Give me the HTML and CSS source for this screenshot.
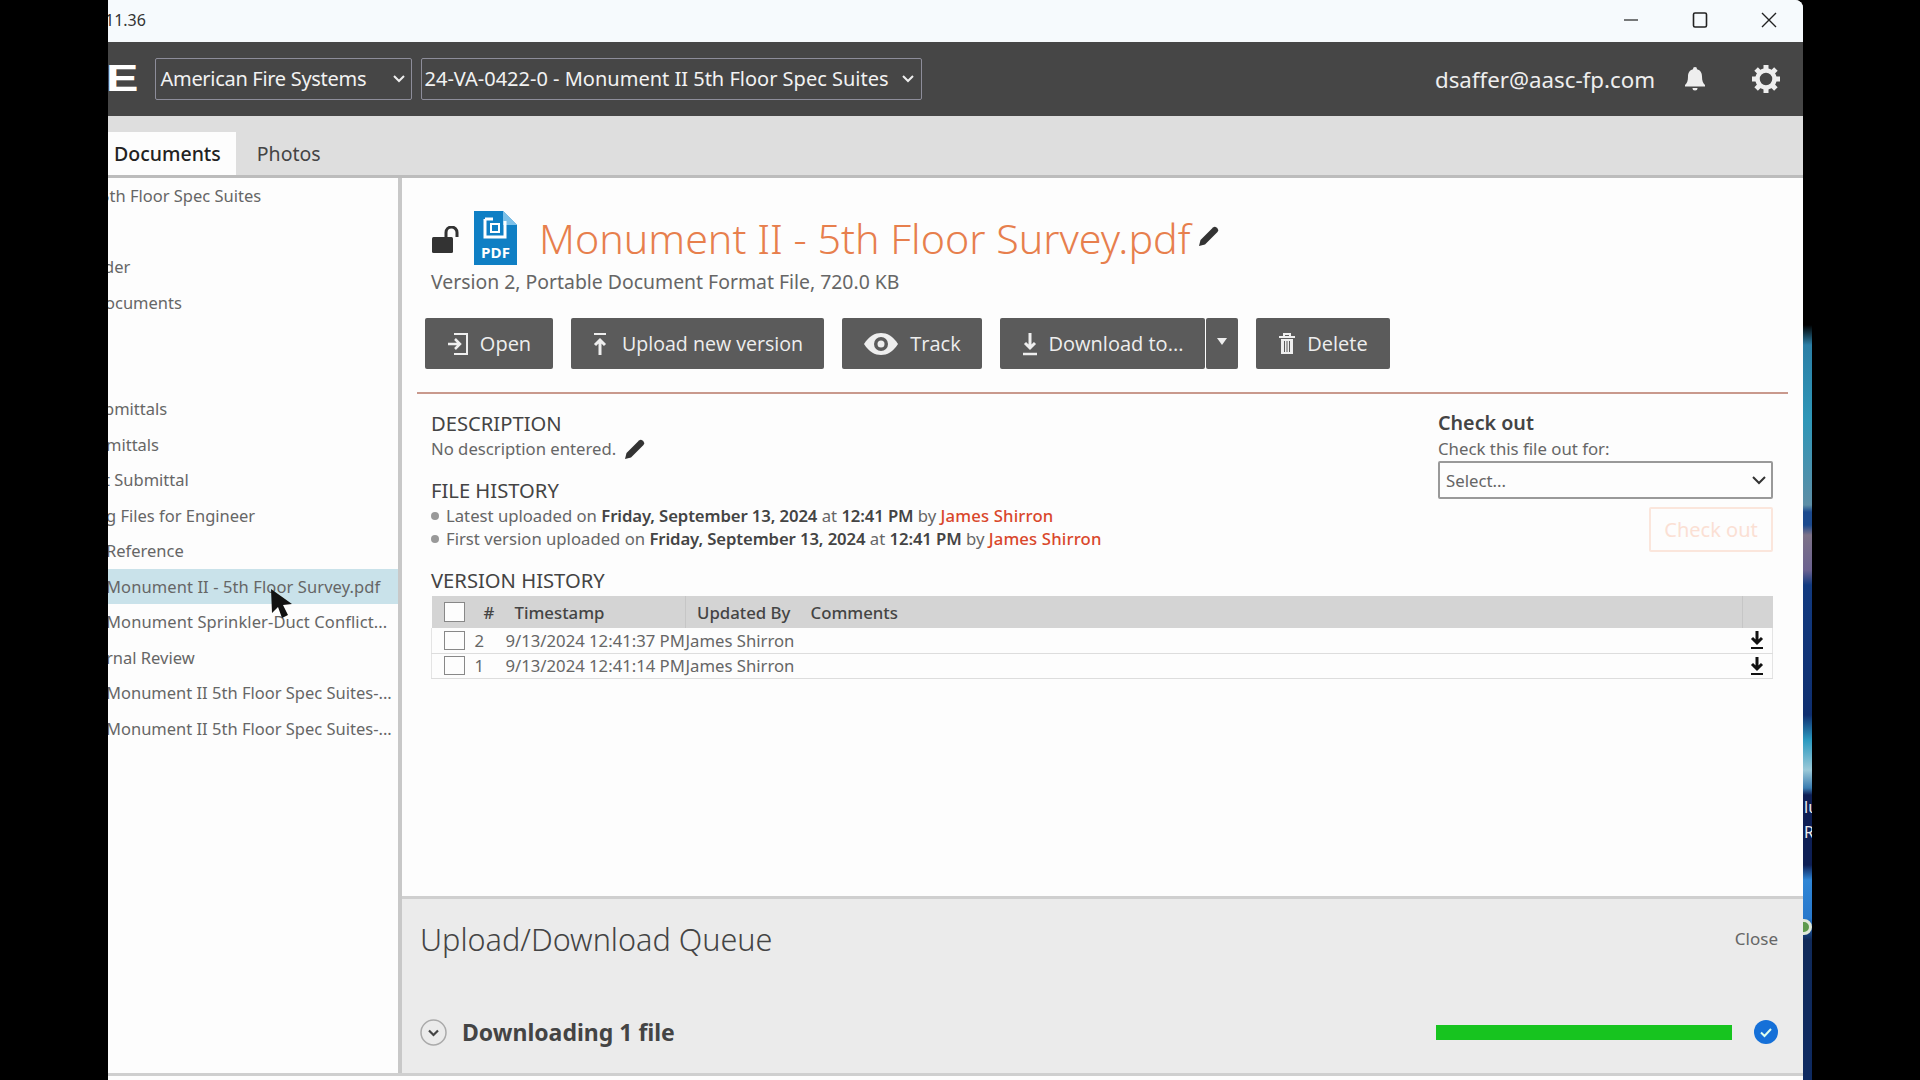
FILE: index.html
```html
<!DOCTYPE html>
<html lang="en">
<head>
  <meta charset="UTF-8" />
  <title>Monument II - 5th Floor Survey.pdf</title>
  <link rel="stylesheet" href="styles.css">
</head>
<body>
  <div class="window">
    <div class="titlebar">
      <span class="version">11.36</span>
      <div class="win-controls">
        <svg width="16" height="16" viewBox="0 0 16 16"><path d="M1 8h14" stroke="#222" stroke-width="1.2"/></svg>
        <svg width="16" height="16" viewBox="0 0 16 16"><rect x="1.5" y="1" width="13" height="14" rx="1.5" fill="none" stroke="#222" stroke-width="1.6"/></svg>
        <svg width="16" height="16" viewBox="0 0 16 16"><path d="M1 1l14 14M15 1L1 15" stroke="#222" stroke-width="1.4"/></svg>
      </div>
    </div>

    <header class="topbar">
      <span class="logo">E</span>
      <div class="picker picker-company">American Fire Systems
        <svg class="caret" width="12" height="8" viewBox="0 0 12 8"><path d="M1 1l5 5 5-5" fill="none" stroke="#eee" stroke-width="2"/></svg>
      </div>
      <div class="picker picker-project">24-VA-0422-0 - Monument II 5th Floor Spec Suites
        <svg class="caret" width="12" height="8" viewBox="0 0 12 8"><path d="M1 1l5 5 5-5" fill="none" stroke="#eee" stroke-width="2"/></svg>
      </div>
      <div class="user">dsaffer@aasc-fp.com</div>
      <svg class="bell" width="22" height="26" viewBox="0 0 22 26"><path d="M11 1a2 2 0 0 1 2 2.2c3.6.9 5 3.8 5 7.3 0 4.500 1 6.500 3 8.500v1.500H1V19c2-2 3-4 3-8.500 0-3.500 1.400-6.400 5-7.300A2 2 0 0 1 11 1zM8.500 22h5a2.500 2.500 0 0 1-5 0z" fill="#eee"/></svg>
      <svg class="gear" width="30" height="30" viewBox="0 0 30 30"><circle cx="15" cy="15" r="8.500" fill="none" stroke="#eee" stroke-width="4.500"/><g stroke="#eee" stroke-width="5"><path d="M15 1v6M15 23v6M1 15h6M23 15h6M5.100 5.100l4.200 4.200M20.700 20.700l4.200 4.200M24.900 5.100l-4.200 4.200M9.300 20.700l-4.200 4.200"/></g></svg>
    </header>

    <div class="tabs">
      <div class="tab active">Documents</div>
      <div class="tab">Photos</div>
    </div>

    <div class="body">
      <aside class="tree">
        <div class="row clip-b">5th Floor Spec Suites</div>
        <div class="row"></div>
        <div class="row clip-c">der</div>
        <div class="row clip-a">ocuments</div>
        <div class="row"></div>
        <div class="row"></div>
        <div class="row clip-c">bmittals</div>
        <div class="row clip-m">mittals</div>
        <div class="row clip-c">t Submittal</div>
        <div class="row clip-m">g Files for Engineer</div>
        <div class="row clip-m">Reference</div>
        <div class="row selected wide">Monument II - 5th Floor Survey.pdf</div>
        <div class="row clip-m wide">Monument Sprinkler-Duct Conflict...</div>
        <div class="row clip-m">rnal Review</div>
        <div class="row clip-m">Monument II 5th Floor Spec Suites-...</div>
        <div class="row clip-m">Monument II 5th Floor Spec Suites-...</div>
      </aside>

      <main class="main">
        <section class="detail">
          <div class="file-title">
            <svg class="lock" width="30" height="28" viewBox="0 0 30 28"><rect x="1" y="11" width="21" height="16" rx="1.500" fill="#333"/><path d="M15 11V6.500a5.500 5.500 0 0 1 11 0V11" fill="none" stroke="#333" stroke-width="3"/></svg>
            <svg class="pdf" width="43" height="54" viewBox="0 0 43 54">
              <path d="M0 0h29l14 14v40H0z" fill="#0f7fc4"/>
              <path d="M29 0l14 14H29z" fill="#7cc0e8"/>
              <path d="M11 8v18h20V10" fill="none" stroke="#fff" stroke-width="3"/>
              <path d="M11 8h8" stroke="#fff" stroke-width="3"/>
              <rect x="17" y="13" width="8" height="8" fill="none" stroke="#fff" stroke-width="2"/>
              <text x="21.500" y="47" class="pdf-label">PDF</text>
            </svg>
            <h1>Monument II - 5th Floor Survey.pdf</h1>
            <svg class="pencil" width="22" height="22" viewBox="0 0 22 22"><path d="M1 21l1.500-6L15 2.500a2.500 2.500 0 0 1 3.500 0l1 1a2.500 2.500 0 0 1 0 3.500L7 19.500z" fill="#333"/></svg>
          </div>
          <div class="file-sub">Version 2, Portable Document Format File, 720.0 KB</div>

          <div class="actions">
            <button class="btn btn-open">
              <svg width="22" height="24" viewBox="0 0 22 24"><path d="M7 2h13v20H7" fill="none" stroke="#eee" stroke-width="2"/><path d="M1 12h11M8 7l5 5-5 5" fill="none" stroke="#eee" stroke-width="2.500"/></svg>
              Open</button>
            <button class="btn btn-upload">
              <svg width="16" height="24" viewBox="0 0 16 24"><path d="M2 2h12" stroke="#eee" stroke-width="2"/><path d="M8 23V8M3 13l5-5 5 5" fill="none" stroke="#eee" stroke-width="3"/></svg>
              Upload new version</button>
            <button class="btn btn-track">
              <svg width="36" height="24" viewBox="0 0 36 24"><path d="M1 12C6 4 12 1 18 1s12 3 17 11c-5 8-11 11-17 11S6 20 1 12z" fill="#eee"/><circle cx="18" cy="12" r="7" fill="#5b5b5b"/><circle cx="18" cy="12" r="3.500" fill="#eee"/></svg>
              Track</button>
            <div class="split">
              <button class="btn btn-download">
                <svg width="16" height="24" viewBox="0 0 16 24"><path d="M8 1v15M3 11l5 5 5-5" fill="none" stroke="#eee" stroke-width="3"/><path d="M1 22h14" stroke="#eee" stroke-width="2.500"/></svg>
                Download to...</button>
              <button class="btn btn-more"><span class="tri"></span></button>
            </div>
            <button class="btn btn-delete">
              <svg width="18" height="24" viewBox="0 0 18 24"><path d="M1 5h16M6 5V2h6v3" fill="none" stroke="#eee" stroke-width="2"/><path d="M3 7h12v15H3z" fill="#eee"/><path d="M6.500 9v11M9 9v11M11.500 9v11" stroke="#5b5b5b" stroke-width="1"/></svg>
              Delete</button>
          </div>
          <hr class="rule">

          <div class="info">
            <div class="info-left">
              <h2>DESCRIPTION</h2>
              <p class="no-desc">No description entered.
                <svg width="22" height="22" viewBox="0 0 22 22"><path d="M1 21l1.500-6L15 2.500a2.500 2.500 0 0 1 3.500 0l1 1a2.500 2.500 0 0 1 0 3.500L7 19.500z" fill="#333"/></svg>
              </p>
              <h2 class="file-history">FILE HISTORY</h2>
              <ul class="history">
                <li>Latest uploaded on <b>Friday, September 13, 2024</b> at <b>12:41 PM</b> by <a>James Shirron</a></li>
                <li>First version uploaded on <b>Friday, September 13, 2024</b> at <b>12:41 PM</b> by <a>James Shirron</a></li>
              </ul>
            </div>
            <div class="checkout">
              <h3>Check out</h3>
              <div class="checkout-label">Check this file out for:</div>
              <div class="select">Select...
                <svg width="14" height="9" viewBox="0 0 14 9"><path d="M1 1l6 6 6-6" fill="none" stroke="#333" stroke-width="2"/></svg>
              </div>
              <div class="checkout-btn">Check out</div>
            </div>
          </div>

          <h2 class="version-title">VERSION HISTORY</h2>
          <table class="versions">
            <thead>
              <tr>
                <th class="col-check"><span class="box box-head"></span></th>
                <th class="col-num">#</th>
                <th class="col-time">Timestamp</th>
                <th class="col-by">Updated By</th>
                <th class="col-comments">Comments</th>
                <th class="col-dl"></th>
              </tr>
            </thead>
            <tbody>
              <tr>
                <td><span class="box"></span></td>
                <td class="num">2</td>
                <td class="time">9/13/2024 12:41:37 PM</td>
                <td>James Shirron</td>
                <td></td>
                <td class="dl"><svg width="14" height="20" viewBox="0 0 14 20"><path d="M7 1v12M2 8l5 5 5-5" fill="none" stroke="#111" stroke-width="3"/><path d="M1 18h12" stroke="#111" stroke-width="2"/></svg></td>
              </tr>
              <tr>
                <td><span class="box"></span></td>
                <td class="num">1</td>
                <td class="time">9/13/2024 12:41:14 PM</td>
                <td>James Shirron</td>
                <td></td>
                <td class="dl"><svg width="14" height="20" viewBox="0 0 14 20"><path d="M7 1v12M2 8l5 5 5-5" fill="none" stroke="#111" stroke-width="3"/><path d="M1 18h12" stroke="#111" stroke-width="2"/></svg></td>
              </tr>
            </tbody>
          </table>
        </section>

        <section class="queue">
          <div class="queue-head">
            <h2>Upload/Download Queue</h2>
            <span class="queue-close">Close</span>
          </div>
          <div class="queue-row">
            <svg width="27" height="27" viewBox="0 0 27 27"><circle cx="13.500" cy="13.500" r="12.500" fill="none" stroke="#aaa" stroke-width="1.500"/><path d="M9 11.500l4.500 4.500 4.500-4.500" fill="none" stroke="#444" stroke-width="2.200"/></svg>
            <span class="queue-name">Downloading 1 file</span>
            <div class="bar"></div>
            <svg class="done" width="24" height="24" viewBox="0 0 24 24"><circle cx="12" cy="12" r="12" fill="#1570d8"/><path d="M7 12.500l3.500 3.500 6.500-7" fill="none" stroke="#dfe" stroke-width="2"/></svg>
          </div>
        </section>
      </main>
    </div>
    <div class="footer-strip"></div>

    <svg class="cursor" width="24" height="32" viewBox="0 0 24 32"><path d="M2 1l1 24 6-6 4 11 6-3-5-10 9-1z" fill="#111"/></svg>
  </div>

  <div class="wallpaper">
    <span class="wp-text wp-one">lu</span>
    <span class="wp-text wp-two">Ri</span>
    <span class="wp-badge"></span>
  </div>
</body>
</html>
```

FILE: styles.css
```css
* {
  margin: 0;
  padding: 0;
  box-sizing: border-box;
}

body {
  background: #000;
  height: 1080px;
  overflow: hidden;
  display: flex;
  padding-left: 108px;
  font-family: "Noto Sans", "Open Sans", sans-serif;
  color: #555;
}

.window {
  position: relative;
  width: 1695px;
  height: 1080px;
  display: flex;
  flex-direction: column;
  background: #fdfdfd;
  border-top-right-radius: 8px;
  overflow: hidden;
}

.wallpaper {
  position: relative;
  width: 9px;
  height: 1080px;
  overflow: hidden;
  background: linear-gradient(to bottom,
    #000 0, #000 325px, #2b7fa6 345px, #2f97b8 420px, #5d8ea6 505px,
    #1c4a8e 512px, #1c4a8e 525px, #7d7288 535px, #6c6290 570px,
    #123a80 585px, #0f2f70 715px, #2b9ac0 740px, #9bc9d8 770px,
    #3a7cb0 788px, #0e1f55 795px, #0e1f55 865px, #2f86d6 880px,
    #2878cc 918px, #102a5a 940px, #0e2a62 1080px);
}

.wp-text {
  position: absolute;
  left: 1px;
  color: #eee;
  font-size: 16px;
  line-height: 20px;
}
.wp-one { top: 797px; }
.wp-two { top: 822px; }

.wp-badge {
  position: absolute;
  left: -7px;
  top: 919px;
  width: 16px;
  height: 16px;
  border-radius: 50%;
  border: 3px solid #dfe8d8;
  background: #5d9a4c;
}

/* title bar */
.titlebar {
  height: 42px;
  flex: none;
  background: #f6fafd;
  display: flex;
  align-items: center;
  justify-content: space-between;
}

.version {
  margin-left: -3px;
  margin-top: -2px;
  font-size: 16px;
  color: #333;
}

.win-controls {
  display: flex;
  gap: 53px;
  padding-right: 26px;
  margin-top: -2px;
}

/* dark header */
.topbar {
  height: 74px;
  flex: none;
  background: #464646;
  display: flex;
  align-items: center;
  color: #eee;
}

.logo {
  width: 48.500px;
  flex: none;
  font-family: "Liberation Sans", sans-serif;
  font-weight: bold;
  font-size: 36px;
  line-height: 36px;
  color: #fff;
  transform: scaleX(1.35);
  transform-origin: 0 50%;
  margin-left: -2px;
}

.picker {
  height: 42px;
  margin-top: -1px;
  border: 1px solid #8d8d9a;
  border-radius: 2px;
  display: flex;
  align-items: center;
  justify-content: space-between;
  font-size: 20px;
  white-space: nowrap;
  color: #f2f2f2;
}

.picker-company {
  width: 257px;
  padding: 0 6px 0 5px;
  letter-spacing: -0.3px;
}

.picker-project {
  width: 501px;
  margin-left: 9px;
  padding: 0 7px 0 3px;
}

.user {
  margin-left: auto;
  font-size: 22.300px;
  color: #eee;
}

.bell {
  margin-left: 29px;
}

.gear {
  margin-left: 45px;
  margin-right: 22px;
}

/* tabs */
.tabs {
  height: 62px;
  flex: none;
  background: #dedede;
  border-bottom: 3px solid #bcbcbc;
  display: flex;
  align-items: flex-end;
}

.tab {
  height: 43px;
  display: flex;
  align-items: center;
  font-size: 19.500px;
  color: #444;
  padding: 0 21px;
}

.tab.active {
  background: #fdfdfd;
  color: #222;
  padding: 0 15px 0 6px;
  font-weight: 500;
}

/* tree + main */
.body {
  flex: 1;
  min-height: 0;
  display: flex;
  border-bottom: 3px solid #cfcfcf;
}

.footer-strip {
  height: 4px;
  flex: none;
}

.tree {
  width: 290px;
  flex: none;
  background: #fdfdfd;
  overflow: hidden;
  font-size: 16.500px;
  color: #666;
}

.row {
  height: 35.500px;
  line-height: 35.500px;
  white-space: nowrap;
}

.row.selected {
  background: #c9e2ea;
  text-indent: -2px;
}

.wide { letter-spacing: 0.1px; }
.clip-a { margin-left: -3px; }
.clip-b { margin-left: -8px; }
.clip-c { margin-left: -4px; }
.clip-m { margin-left: -2px; }

.main {
  flex: 1;
  min-width: 0;
  display: flex;
  flex-direction: column;
  border-left: 4px solid #c8c8c8;
}

.detail {
  flex: 1;
  padding: 0 15px 0 13px;
}

.file-title {
  height: 96px;
  padding-left: 16px;
  padding-top: 24px;
  display: flex;
  align-items: center;
}

.lock {
  margin-top: 3px;
}

.pdf {
  margin-left: 13px;
}

.pdf-label {
  font-family: "Open Sans", sans-serif;
  font-weight: 700;
  font-size: 15px;
  fill: #fff;
  text-anchor: middle;
}

.file-title h1 {
  margin-left: 22px;
  font-size: 41.200px;
  font-weight: 300;
  color: #e77f4d;
  white-space: nowrap;
}

.pencil {
  margin-left: 8px;
  margin-top: -4px;
}

.file-sub {
  padding-left: 16px;
  margin-top: -5px;
  font-size: 19.400px;
  line-height: 26px;
  color: #666;
}

.actions {
  display: flex;
  gap: 18px;
  margin-top: 23px;
  padding-left: 10px;
}

.btn {
  height: 51px;
  border: none;
  border-radius: 2px;
  background: #5b5b5b;
  color: #eee;
  font-family: "Open Sans", sans-serif;
  font-size: 20px;
  display: flex;
  align-items: center;
  justify-content: center;
  gap: 11px;
}

.btn-upload { font-size: 19.600px; gap: 14px; }

.btn-open { width: 128px; }
.btn-upload { width: 253px; }
.btn-track { width: 140px; }
.btn-delete { width: 134px; }

.split {
  display: flex;
  gap: 1px;
}

.btn-download { width: 205px; }
.btn-more { width: 32px; }

.tri {
  width: 0;
  height: 0;
  border-left: 5px solid transparent;
  border-right: 5px solid transparent;
  border-top: 7px solid #eee;
  margin-bottom: 4px;
}

.rule {
  border: none;
  border-top: 2px solid #c9998d;
  margin-top: 23px;
  margin-left: 2px;
}

.info {
  display: flex;
  justify-content: space-between;
  padding: 14.500px 15px 0 16px;
  height: 172px;
}

h2 {
  font-size: 20.200px;
  font-weight: 400;
  line-height: 28px;
  color: #444;
}

.no-desc {
  font-size: 16.700px;
  line-height: 24px;
  color: #666;
  display: flex;
  align-items: center;
  gap: 8px;
}

.file-history {
  margin-top: 15px;
}

.history {
  list-style: none;
  font-size: 16.700px;
  line-height: 23.500px;
  color: #666;
}

.history li::before {
  content: "";
  display: inline-block;
  width: 8px;
  height: 8px;
  border-radius: 50%;
  background: #999;
  margin-right: 7px;
  vertical-align: 2px;
}

.history b {
  font-weight: 600;
  color: #444;
  letter-spacing: -0.1px;
}

.history a {
  font-weight: 500;
  color: #d9472b;
  letter-spacing: 0.15px;
}

.checkout {
  width: 335px;
  display: flex;
  flex-direction: column;
}

.checkout h3 {
  font-size: 19.700px;
  font-weight: 600;
  line-height: 28px;
  color: #444;
}

.checkout-label {
  font-size: 16.800px;
  line-height: 24px;
  color: #666;
}

.select {
  height: 38px;
  margin-top: 0;
  border: 2px solid #999;
  border-radius: 2px;
  padding: 1px 5px 0 6px;
  font-size: 16.800px;
  color: #666;
  display: flex;
  align-items: center;
  justify-content: space-between;
}

.checkout-btn {
  width: 124px;
  height: 45px;
  margin-top: 8px;
  align-self: flex-end;
  border: 2px solid #fbe6dc;
  border-radius: 2px;
  color: #fbe0d4;
  font-size: 20px;
  display: flex;
  align-items: center;
  justify-content: center;
}

.version-title {
  padding-left: 16px;
  margin-bottom: 2px;
}

.versions {
  width: 1342px;
  margin-left: 16px;
  border-collapse: collapse;
  table-layout: fixed;
  font-size: 16.700px;
  color: #666;
}

.versions thead tr {
  background: #d4d4d4;
  height: 32px;
}

.versions tbody tr {
  height: 25px;
  border-bottom: 1px solid #ddd;
  border-left: 1px solid #e4e4e4;
  border-right: 1px solid #e4e4e4;
}

.versions th {
  font-weight: 500;
  color: #444;
  text-align: left;
  font-size: 16.800px;
}

.versions td {
  white-space: nowrap;
}

.col-check { width: 40px; text-align: center; }
.versions th.col-num { width: 33px; padding-left: 12px; }
.versions th.col-time { width: 181px; padding-left: 10px; border-right: 1px solid #c6c6c6; }
.versions th.col-by { width: 124px; padding-left: 11px; }
.versions th.col-comments { padding-left: 1px; }
.col-dl { width: 30px; border-left: 1px solid #c6c6c6; }

.versions td.num {
  padding-left: 3px;
}

.versions td.time {
  padding-left: 1px;
}

.versions td.dl {
  line-height: 0;
  padding-left: 7px;
}

.box {
  display: block;
  width: 21px;
  height: 19px;
  margin-left: 12px;
  background: #fdfdfd;
  border: 1px solid #888;
}

.box-head {
  height: 20px;
}

/* queue */
.queue {
  height: 177px;
  flex: none;
  background: #ebebeb;
  border-top: 3px solid #cfcfcf;
  padding: 0 25px 0 18px;
}

.queue-head {
  display: flex;
  align-items: center;
  justify-content: space-between;
  height: 80px;
}

.queue-head h2 {
  font-size: 30.600px;
  font-weight: 300;
  color: #444;
  line-height: 40px;
}

.queue-close {
  font-size: 17px;
  color: #666;
  margin-top: -2px;
}

.queue-row {
  display: flex;
  align-items: center;
  margin-top: 37px;
}

.queue-name {
  margin-left: 15px;
  font-size: 23px;
  font-weight: 700;
  color: #444;
}

.bar {
  width: 296px;
  height: 15px;
  margin-left: auto;
  background: #17c41f;
}

.done {
  margin-left: 22px;
}

.cursor {
  position: absolute;
  left: 161px;
  top: 588px;
}
```
